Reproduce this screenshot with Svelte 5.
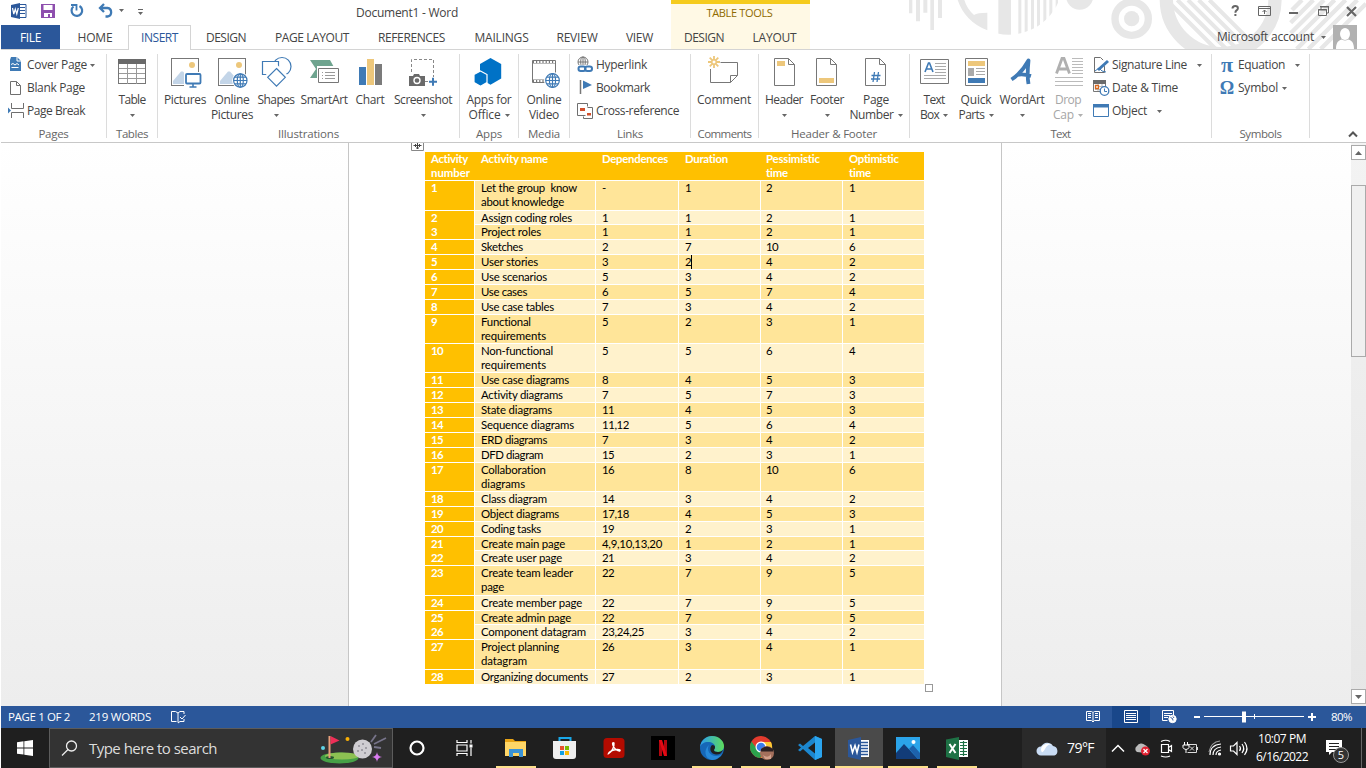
<script>
  // Tightens or loosens letter-spacing so a label fills its designed width.
  function fit(node, width) {
    if (!width) return;
    const n = node.textContent.length;
    const now = node.getBoundingClientRect().width;
    const s = (width - now) / n;
    node.style.letterSpacing = s.toFixed(3) + 'px';
  }

  const tabs = [
    ['HOME', 66, 35], ['INSERT', 63, 37, true], ['DESIGN', 70, 40], ['PAGE LAYOUT', 102, 74],
    ['REFERENCES', 97, 67], ['MAILINGS', 83, 54], ['REVIEW', 68, 41], ['VIEW', 57, 27]
  ];

  const head = [
    [['Activity', 37], ['number', 39]], [['Activity name', 67]], [['Dependences', 66]],
    [['Duration', 43]], [['Pessimistic', 54], ['time', 22]], [['Optimistic', 50], ['time', 22]]
  ];

  const rows = [
    [30, [['Let the group  know', 96], ['about knowledge', 83]], '-', 4, '1', '2', '1'],
    [14, [['Assign coding roles', 91]], '1', 6, '1', '2', '1'],
    [15, [['Project roles', 60]], '1', 6, '1', '2', '1'],
    [15, [['Sketches', 42]], '2', 6, '7', '10', '6'],
    [15, [['User stories', 57]], '3', 6, '2', '4', '2'],
    [15, [['Use scenarios', 66]], '5', 6, '3', '4', '2'],
    [15, [['Use cases', 46]], '6', 6, '5', '7', '4'],
    [15, [['Use case tables', 73]], '7', 6, '3', '4', '2'],
    [29, [['Functional', 50], ['requirements', 65]], '5', 6, '2', '3', '1'],
    [29, [['Non-functional', 72], ['requirements', 65]], '5', 6, '5', '6', '4'],
    [15, [['Use case diagrams', 88]], '8', 6, '4', '5', '3'],
    [15, [['Activity diagrams', 82]], '7', 6, '5', '7', '3'],
    [15, [['State diagrams', 71]], '11', 12, '4', '5', '3'],
    [15, [['Sequence diagrams', 93]], '11,12', 27, '5', '6', '4'],
    [15, [['ERD diagrams', 66]], '7', 6, '3', '4', '2'],
    [15, [['DFD diagram', 62]], '15', 12, '2', '3', '1'],
    [29, [['Collaboration', 65], ['diagrams', 44]], '16', 12, '8', '10', '6'],
    [15, [['Class diagram', 66]], '14', 12, '3', '4', '2'],
    [15, [['Object diagrams', 78]], '17,18', 27, '4', '5', '3'],
    [15, [['Coding tasks', 60]], '19', 12, '2', '3', '1'],
    [14, [['Create main page', 84]], '4,9,10,13,20', 60, '1', '2', '1'],
    [15, [['Create user page', 81]], '21', 12, '3', '4', '2'],
    [30, [['Create team leader', 92], ['page', 23]], '22', 12, '7', '9', '5'],
    [15, [['Create member page', 101]], '22', 12, '7', '9', '5'],
    [14, [['Create admin page', 90]], '22', 12, '7', '9', '5'],
    [15, [['Component datagram', 105]], '23,24,25', 42, '3', '4', '2'],
    [30, [['Project planning', 78], ['datagram', 46]], '26', 12, '3', '4', '1'],
    [14, [['Organizing documents', 107]], '27', 12, '2', '3', '1']
  ];
</script>

{#snippet t(s, w)}<span class="t" use:fit={w}>{s}</span>{/snippet}
{#snippet arrow()}<svg class="arr" width="5" height="3" viewBox="0 0 5 3"><path d="M0 0h5L2.5 3z" fill="currentColor" /></svg>{/snippet}
{#snippet big(icon, w, l1, w1, l2, w2, arr, off)}
  <div class="big" class:off style:width="{w}px">
    {@render icon()}
    <div class="ln">{@render t(l1, w1)}</div>
    <div class="ln second">{#if l2}{@render t(l2, w2)}{/if}{#if arr}<i class:sp={l2}>{@render arrow()}</i>{/if}</div>
  </div>
{/snippet}
{#snippet small(icon, l, w, gap)}
  <div class="small">{@render icon()}{@render t(l, w)}{#if gap}<i style:padding-left="{gap}px">{@render arrow()}</i>{/if}</div>
{/snippet}
{#snippet globe(x, y, r)}
  <g fill="#fff" stroke="#3f7ab5" stroke-width="1.2">
    <circle cx={x} cy={y} {r} /><ellipse cx={x} cy={y} rx={r * 0.45} ry={r} />
    <path d="M{x} {y - r}v{2 * r}M{x - r} {y}h{2 * r}M{x - r * 0.85} {y - r * 0.5}h{r * 1.7}M{x - r * 0.85} {y + r * 0.5}h{r * 1.7}" />
  </g>
{/snippet}
{#snippet photo(x)}
  <rect x={x + 0.5} y="58.5" width="27" height="27" fill="#fff" stroke="#777" />
  <path d="M{x + 2} 84V81l8-9.5h2l9 10V84z" fill="#c3d5e8" /><circle cx={x + 21} cy="65" r="3" fill="#edc77b" />
{/snippet}
{#snippet sheet(x)}
  <path d="M{x + 0.5} 58.5h14l6 6v21h-20zM{x + 14.5} 58.5v6h6" fill="#fff" stroke="#777" />
{/snippet}

{#snippet iTable()}<svg viewBox="116 57 32 32"><rect x="118.5" y="59.5" width="27" height="24" fill="#fff" stroke="#777" /><path d="M118 59h28v5h-28z" fill="#6a6a6a" /><path d="M119 68.5h26M119 73.500h26M119 78.500h26M127.500 64v20M136.500 64v20" stroke="#9a9a9a" /></svg>{/snippet}
{#snippet iPic()}<svg viewBox="169 57 32 32">{@render photo(171)}<path d="M184 72h17v17h-17z" fill="#fff" /><rect x="186" y="74" width="14.500" height="9.500" rx="1" fill="#fff" stroke="#3f7ab5" stroke-width="1.800" /><path d="M193 84v2.500M189.500 87h7" stroke="#3f7ab5" stroke-width="1.600" /></svg>{/snippet}
{#snippet iOnPic()}<svg viewBox="216 57 32 32">{@render photo(218)}<circle cx="240.300" cy="80.500" r="8.200" fill="#fff" />{@render globe(240.3, 80.5, 6.7)}</svg>{/snippet}
{#snippet iShapes()}<svg viewBox="260 57 32 32"><g fill="#fff" stroke="#3f7ab5" stroke-width="1.200"><circle cx="282" cy="66.500" r="9" /><path d="M262.500 61.500h16v13h-16z" /><path d="M276.500 67l10 10-10 10-10-10z" stroke="#fff" stroke-width="4" /><path d="M276.500 68.500l8.800 8.800-8.800 8.800-8.800-8.800z" /></g></svg>{/snippet}
{#snippet iSmart()}<svg viewBox="308 57 32 32"><path d="M310 60h20l5 9-5 9h-20l6-9z" fill="#6fa48f" /><path d="M317 66h23v19h-23z" fill="#fff" /><path d="M318.500 68.500h20v14h-20z" fill="#fff" stroke="#777" /><path d="M322 72.500h1M322 75.500h1M322 78.500h1M325 72.500h10M325 75.500h10M325 78.500h10" stroke="#999" /></svg>{/snippet}
{#snippet iChart()}<svg viewBox="354 57 32 32"><path d="M359 67h7v18h-7z" fill="#3f7ab5" /><path d="M367 59h7v26h-7z" fill="#edc77b" /><path d="M375 64h7v21h-7z" fill="#7b7b7b" /></svg>{/snippet}
{#snippet iShot()}<svg viewBox="407 57 32 32"><path d="M411.500 72V59.500h22V77M425 81.500h4" fill="none" stroke="#888" stroke-dasharray="3 2" /><path d="M409 76h4l1-2h5l1 2h5v10h-16z" fill="#6a6a6a" /><circle cx="417" cy="80.500" r="3" fill="#6a6a6a" stroke="#fff" stroke-width="1.400" /><path d="M429 81.800h8M433 77.800v8" stroke="#3f7ab5" stroke-width="2" /></svg>{/snippet}
{#snippet iApps()}<svg viewBox="473 57 32 32"><path d="M490.500 58l10.700 6v14.500l-10.700 6.200-10.500-6.200V64z" fill="#0072c6" /><path d="M480.500 71l6.500 3.600v8l-6.500 3.600-6.500-3.600v-8z" fill="#0072c6" stroke="#fff" stroke-width="1.200" /></svg>{/snippet}
{#snippet iVideo()}<svg viewBox="528 57 32 32"><path d="M532.500 60.500h23v22h-23z" fill="#fff" stroke="#777" /><path d="M533 62h22M533 81h22" stroke="#777" stroke-width="3" /><path d="M534 62h21M534 81h21" stroke="#fff" stroke-width="1.800" stroke-dasharray="2 1.200" /><circle cx="552.500" cy="80.500" r="8.500" fill="#fff" />{@render globe(552.5, 80.5, 6.8)}</svg>{/snippet}
{#snippet iComment()}<svg viewBox="708 57 32 32"><path d="M720.500 62.500h17v13l-7 7h-20V69M737.500 75.500h-7v7" fill="none" stroke="#777" /><path d="M714 56v4M714 64v4M708 62h4M716 62h4M709.700 57.700l3 3M715.300 63.300l3 3M718.300 57.700l-3 3M712.700 63.300l-3 3" stroke="#edc77b" stroke-width="1.800" /><circle cx="714" cy="62" r="2.200" fill="#fff" stroke="#edc77b" stroke-width="1.400" /></svg>{/snippet}
{#snippet iHeader()}<svg viewBox="768 57 32 32">{@render sheet(774)}<path d="M777 61h8v5h-8z" fill="#edc77b" /></svg>{/snippet}
{#snippet iFooter()}<svg viewBox="811 57 32 32">{@render sheet(816)}<path d="M819 78h15v5h-15z" fill="#edc77b" /></svg>{/snippet}
{#snippet iNum()}<svg viewBox="860 57 32 32">{@render sheet(865)}<path d="M874.500 72l-1.500 10M878.500 72l-1.500 10M871.500 75.500h9M871 79h9" stroke="#3f7ab5" stroke-width="1.300" /></svg>{/snippet}
{#snippet iText()}<svg viewBox="918 57 32 32"><path d="M920.500 59.500h28v24h-28z" fill="#fff" stroke="#777" /><path d="M925 72l3.500-9h1l3.500 9M926.500 69h5" fill="none" stroke="#3f7ab5" stroke-width="1.600" /><path d="M935 63.500h11M935 66.500h11M935 69.500h11M935 72.500h11M924 75.500h22M924 78.500h22" stroke="#aaa" /></svg>{/snippet}
{#snippet iQuick()}<svg viewBox="960 57 32 32"><path d="M965.500 58.500h22v27h-22z" fill="#fff" stroke="#777" /><path d="M968 61h17v5h-17z" fill="#edc77b" /><path d="M968 68h6v8h-6z" fill="#aaa" /><path d="M976 68.500h9M976 71.500h9M976 74.500h9" stroke="#aaa" /><path d="M968 78h17v5h-17z" fill="#3f7ab5" /></svg>{/snippet}
{#snippet iWA()}<svg viewBox="1006 57 32 32"><path d="M1011.500 79.500C1020 74 1025 67 1028.500 60.500C1027.500 70 1027 76 1028.500 84M1017 75C1022 73.500 1026 74.500 1031 76" fill="none" stroke="#3f7ab5" stroke-width="3.800" stroke-linejoin="round" /></svg>{/snippet}
{#snippet iDrop()}<svg viewBox="1052 57 32 32"><path d="M1056.500 73.500l5.500-15h2l5.500 15M1059 69h8" fill="none" stroke="#b0b0b0" stroke-width="2.800" /><path d="M1072 58.500h11M1072 61.500h11M1072 64.500h11M1072 67.500h11M1072 70.500h11M1072 73.500h11M1055 77.500h28M1055 81.500h28M1055 85.500h28" stroke="#bbb" /></svg>{/snippet}

{#snippet sCover()}<svg viewBox="9 57 16 16"><path d="M12 57h6l4 4v10H11V60z" fill="#3f7ab5" /><path d="M18 57v4h4" fill="none" stroke="#fff" /><path d="M12 64.500l2-1 2 1.500 2-1.500 2 1.500M12.500 67.500h7" fill="none" stroke="#fff" /></svg>{/snippet}
{#snippet sBlank()}<svg viewBox="8 79 16 16"><path d="M10.500 80.500h6l4 4v9h-10zM16.500 80.500v4h4" fill="#fff" stroke="#6f6f6f" /></svg>{/snippet}
{#snippet sBreak()}<svg viewBox="8 102 16 16"><path d="M11.500 102v5.500h12V102M11.500 117v-5.500h12V117" fill="none" stroke="#6f6f6f" /><path d="M8 106.500l3 3-3 3z" fill="#3f7ab5" /></svg>{/snippet}
{#snippet sLink()}<svg viewBox="577 57 16 16"><g fill="none" stroke="#777"><circle cx="583" cy="62" r="5" /><ellipse cx="583" cy="62" rx="2.300" ry="5" /><path d="M578 62h10M583 57v10" /></g><path d="M577 65h16v8h-16z" fill="#fff" /><g fill="none" stroke="#3f7ab5" stroke-width="2"><rect x="578.500" y="66.500" width="7" height="4.500" rx="2.200" /><rect x="585" y="66.500" width="7" height="4.500" rx="2.200" /></g></svg>{/snippet}
{#snippet sBook()}<svg viewBox="577 80 16 16"><path d="M580.500 80v14" stroke="#777" stroke-width="1.500" /><path d="M583 80.500l9 4.500-9 4z" fill="#3f7ab5" /></svg>{/snippet}
{#snippet sCross()}<svg viewBox="577 102 16 16"><path d="M585.500 114.500h-8v-12h10v3" fill="none" stroke="#6f6f6f" /><path d="M587.500 106.500h5v11h-9v-2" fill="none" stroke="#6f6f6f" /><path d="M580 107h5v3h-5zM587 112h4v2.500h-4z" fill="#d2502d" /></svg>{/snippet}
{#snippet sSign()}<svg viewBox="1093 56 16 16"><path d="M1094.500 56.500h6l4 4v11h-10z" fill="#fff" stroke="#6f6f6f" /><path d="M1097 69l10-10" stroke="#fff" stroke-width="5" /><path d="M1098 69l10-9" stroke="#3f7ab5" stroke-width="3" /><path d="M1095 70l4-3 3 3 4 1" fill="none" stroke="#3f7ab5" /></svg>{/snippet}
{#snippet sDate()}<svg viewBox="1093 79 16 16"><path d="M1093.500 80.500h12v10h-12z" fill="#fff" stroke="#777" /><path d="M1093 79h13v4h-13z" fill="#6a6a6a" /><path d="M1095 85.500h9M1095 88.500h5M1098 83v7M1102 83v4" stroke="#bbb" /><path d="M1095.500 84.500h3v3h-3z" fill="#fff" stroke="#d9681d" stroke-width="1.300" /><circle cx="1104.500" cy="90" r="4.300" fill="#fff" stroke="#3f7ab5" stroke-width="1.300" /><path d="M1104.500 87.500v3h2.500" fill="none" stroke="#3f7ab5" /></svg>{/snippet}
{#snippet sObj()}<svg viewBox="1093 103 16 16"><path d="M1093.500 104.500h15v12h-15z" fill="#fff" stroke="#3f7ab5" /><path d="M1093 104h16v3.500h-16z" fill="#3f7ab5" /></svg>{/snippet}
{#snippet sPi()}<b class="greek pi">π</b>{/snippet}
{#snippet sOm()}<b class="greek">Ω</b>{/snippet}

<div class="app">
  <header>
    <svg class="deco" width="466" height="49" viewBox="0 0 1398 147">
      <defs>
        <clipPath id="c1"><circle cx="325" cy="-60" r="164" /></clipPath>
        <clipPath id="c2"><circle cx="962" cy="-2" r="150" /></clipPath>
      </defs>
      <g fill="#e7e7e7">
        <path d="M27 0h10v40H27zM48 0h12v64H48zM70 0h12v38H70zM91 0h11v90H91zM114 0h12v54h-12z" />
        <path d="M173 0H193Q200 25 222 45Q232 38 262 38V91Q195 65 173 0z" />
        <path clip-path="url(#c1)" d="M295 0h38v147h-38zM355 0h9v147h-9zM374 0h9v147h-9zM393 0h9v147h-9zM411 0h9v147h-9zM430 0h9v147h-9zM448 0h9v147h-9zM467 0h7v147h-7z" />
        <circle cx="539" cy="-12" r="41" /><circle cx="695" cy="56" r="23" />
      </g>
      <circle cx="695" cy="56" r="50" fill="none" stroke="#e7e7e7" stroke-width="22" />
      <circle cx="962" cy="-2" r="163" fill="none" stroke="#e7e7e7" stroke-width="40" />
      <g clip-path="url(#c2)" stroke="#e7e7e7" stroke-width="12"><path d="M800 0l150 150M832 0l150 150M864 0l150 150M896 0l150 150M928 0l150 150" /></g>
      <g stroke="#e7e7e7" stroke-width="13"><path d="M1172 100L1272 0M1172 68L1240 0M1180 124L1304 0M1190 147L1337 0M1225 147L1372 0M1262 147L1398 11M1176 30L1206 0" /></g>
    </svg>
    <div class="titlebar">
      <svg class="qat" width="150" height="24" viewBox="0 0 150 24">
        <path d="M18 4.500h8v13h-8z" fill="#fff" stroke="#2b579a" /><path d="M20 7.500h5M20 10.500h5M20 13.500h5" stroke="#2b579a" />
        <path d="M11 5l9-2v16l-9-2z" fill="#2b579a" /><path d="M12.500 8l1.300 6 1.500-5 1.500 5L18.300 8" fill="none" stroke="#fff" stroke-width="1.200" />
        <path d="M41 4h14v14H41z" fill="#8e4fae" /><path d="M43.500 5h9v5h-9zM44 13h8v4h-2v-3h-2v3h-4z" fill="#fff" />
        <path d="M73.500 6.500a5.300 5.300 0 1 0 6 -.5" fill="none" stroke="#3f7ab5" stroke-width="2.200" /><path d="M71 5h5.500v5.500" fill="none" stroke="#3f7ab5" stroke-width="1.800" />
        <path d="M104 4l-4 4 4 4M100.500 8h7a4.300 4.300 0 0 1 0 8.500h-2" fill="none" stroke="#3f7ab5" stroke-width="2.300" />
        <path d="M119 9h5l-2.500 3zM138 12h5l-2.500 3z" fill="#666" /><path d="M138 9.500h5" stroke="#666" />
      </svg>
      <div class="title">{@render t('Document1 - Word', 102)}</div>
      <svg class="win" width="140" height="24" viewBox="1226 0 140 24" fill="none" stroke="#666">
        <path d="M1232.500 8.500q0-2.500 2.700-2.500t2.700 2.300q0 1.500-1.500 2.200-1 .5-1 2.200M1235.400 14v2" stroke-width="2" />
        <path d="M1258.500 6.500h12v9h-12zM1259 8.500h11M1264.500 14v-4M1262.500 12l2-2 2 2" />
        <path d="M1289 13h9" stroke-width="2" /><path d="M1318.500 9.500h8v6h-8zM1321 9V7M1320.500 7h8v6h-2M1318 10h9M1320 6.500h9" /><path d="M1347 7l9 9M1356 7l-9 9" stroke-width="2.200" />
      </svg>
    </div>
    <div class="tabs">
      <div class="tab file">{@render t('FILE', 21)}</div>
      {#each tabs as [s, w, tw, on]}
        <div class="tab" class:on style:width="{w}px">{@render t(s, tw)}</div>
      {/each}
      <div class="ctx">
        <div class="ctxname">{@render t('TABLE TOOLS', 66)}</div>
        <div class="ctxtabs"><div class="tab" style:width="66px">{@render t('DESIGN', 40)}</div><div class="tab" style:width="75px">{@render t('LAYOUT', 44)}</div></div>
      </div>
      <div class="acct">
        {@render t('Microsoft account', 97)}{@render arrow()}
        <svg width="24" height="24" viewBox="0 0 24 24"><path d="M0 0h24v24H0z" fill="#b1b1b1" /><ellipse cx="12" cy="9" rx="5" ry="6" fill="#fff" /><path d="M3 24c0-7 3-9 6-9.500q3 2 6 0c3 .5 6 2.500 6 9.500z" fill="#fff" /></svg>
      </div>
    </div>
  </header>

  <div class="ribbon">
    <section style:width="106px"><div class="body"><div class="col" style:padding-left="7px">
      {@render small(sCover, 'Cover Page', 60, 3)}{@render small(sBlank, 'Blank Page', 58)}{@render small(sBreak, 'Page Break', 58)}
    </div></div><footer>{@render t('Pages', 30)}</footer></section>
    <section style:width="51px"><div class="body">{@render big(iTable, 50, 'Table', 27, '', 0, true)}</div><footer>{@render t('Tables', 32)}</footer></section>
    <section style:width="302px"><div class="body" style:padding-left="3px">
      {@render big(iPic, 48, 'Pictures', 42)}{@render big(iOnPic, 46, 'Online', 35, 'Pictures', 42)}{@render big(iShapes, 42, 'Shapes', 37, '', 0, true)}{@render big(iSmart, 54, 'SmartArt', 47)}{@render big(iChart, 38, 'Chart', 29)}{@render big(iShot, 68, 'Screenshot', 58, '', 0, true)}
    </div><footer>{@render t('Illustrations', 61)}</footer></section>
    <section style:width="59px"><div class="body">{@render big(iApps, 58, 'Apps for', 45, 'Office', 32, true)}</div><footer>{@render t('Apps', 26)}</footer></section>
    <section style:width="51px"><div class="body">{@render big(iVideo, 50, 'Online', 35, 'Video', 30)}</div><footer>{@render t('Media', 32)}</footer></section>
    <section style:width="121px"><div class="body"><div class="col" style:padding-left="7px">
      {@render small(sLink, 'Hyperlink', 51)}{@render small(sBook, 'Bookmark', 54)}{@render small(sCross, 'Cross-reference', 83)}
    </div></div><footer>{@render t('Links', 26)}</footer></section>
    <section style:width="68px"><div class="body">{@render big(iComment, 66, 'Comment', 54)}</div><footer>{@render t('Comments', 54)}</footer></section>
    <section style:width="151px"><div class="body" style:padding-left="3px">
      {@render big(iHeader, 44, 'Header', 38, '', 0, true)}{@render big(iFooter, 42, 'Footer', 34, '', 0, true)}{@render big(iNum, 56, 'Page', 26, 'Number', 44, true)}
    </div><footer>{@render t('Header & Footer', 86)}</footer></section>
    <section style:width="302px"><div class="body" style:padding-left="4px">
      {@render big(iText, 40, 'Text', 21, 'Box', 19, true)}{@render big(iQuick, 44, 'Quick', 31, 'Parts', 26, true)}{@render big(iWA, 48, 'WordArt', 45, '', 0, true)}{@render big(iDrop, 44, 'Drop', 26, 'Cap', 21, true, true)}
      <div class="col" style:padding-left="3px">{@render small(sSign, 'Signature Line', 75, 10)}{@render small(sDate, 'Date & Time', 66)}{@render small(sObj, 'Object', 35, 10)}</div>
    </div><footer>{@render t('Text', 20)}</footer></section>
    <section style:width="98px"><div class="body"><div class="col" style:padding-left="7px">
      {@render small(sPi, 'Equation', 47, 10)}{@render small(sOm, 'Symbol', 40, 4)}
    </div></div><footer>{@render t('Symbols', 42)}</footer></section>
    <svg class="collapse" width="10" height="8" viewBox="0 0 10 8"><path d="M1 6.500l4-4 4 4" fill="none" stroke="#555" stroke-width="2" /></svg>
  </div>

  <main>
    <div class="paper">
      <svg class="handle" width="13" height="12" viewBox="0 0 13 12"><path d="M.5 -2h12v12.500H.5z" fill="#fff" stroke="#888" /><path d="M2.500 5.500h8M6.500 0v9M4.500 4v3M8.500 4v3M5 8h3" stroke="#444" /></svg>
      <div class="table">
        <div class="row hd">
          {#each head as cell}<div class="cell">{#each cell as [s, w]}<div>{@render t(s, w)}</div>{/each}</div>{/each}
        </div>
        {#each rows as [h, name, dep, dw, a, b, c], i}
          <div class="row" class:odd={i % 2 === 0} style:height="{h}px">
            <div class="cell n">{@render t(String(i + 1), i < 9 ? 6 : 12)}</div>
            <div class="cell">{#each name as [s, w]}<div>{@render t(s, w)}</div>{/each}</div>
            <div class="cell">{@render t(dep, dw)}</div>
            <div class="cell">{@render t(a, 6)}{#if i === 4}<u class="caret"></u>{/if}</div>
            <div class="cell">{@render t(b, b.length * 6)}</div>
            <div class="cell">{@render t(c, 6)}</div>
          </div>
        {/each}
      </div>
      <div class="resize"></div>
    </div>
    <div class="scroll">
      <div class="sbtn"><svg width="7" height="4" viewBox="0 0 7 4"><path d="M0 4h7L3.500 0z" fill="#666" /></svg></div>
      <div class="thumb"></div>
      <div class="sbtn"><svg width="7" height="4" viewBox="0 0 7 4"><path d="M0 0h7L3.500 4z" fill="#666" /></svg></div>
    </div>
  </main>

  <div class="status">
    {@render t('PAGE 1 OF 2', 62)}
    <span class="words">{@render t('219 WORDS', 62)}</span>
    <svg width="15" height="14" viewBox="0 0 15 14" fill="none" stroke="#fff"><path d="M5.500 11.500h-5v-10h4l2.500 1.500v9.500M7 3l2-1.500h4V4M13 9v2.500h-4l-2 1.500M9 7l2 2 3.500-4" /></svg>
    <div class="views">
      <svg width="14" height="14" viewBox="0 0 14 14" fill="none" stroke="#fff"><path d="M.5 1.500h5l1.500 1 1.500-1h5v9h-5L7 12l-1.500-1.500h-5zM7 3v9M2 3.500h3M2 5.500h3M2 7.500h3M9 3.500h3M9 5.500h3M9 7.500h3" /></svg>
      <div class="view"><svg width="14" height="14" viewBox="0 0 14 14" fill="none" stroke="#fff"><path d="M.5.5h13v12H.5zM2 3.500h10M2 5.500h10M2 7.500h10M2 9.500h10" /></svg></div>
      <svg width="15" height="14" viewBox="0 0 15 14" fill="none" stroke="#fff"><path d="M.5 10.500V.5h11V5M2 3.500h8M2 5.500h6M2 7.500h4M.5 10.500h5" /><circle cx="10.500" cy="9" r="3.700" fill="#fff" /><path d="M8.500 7.500l2 1 .5 2M11 6.500l1 1.500" stroke="#2b579a" /></svg>
    </div>
    <svg class="zoom" width="122" height="14" viewBox="0 0 122 14"><path d="M0 7h6M114 7h8M118 3v8" stroke="#fff" stroke-width="2" /><path d="M10 6.500h100M60.500 4v5" stroke="#fff" /><path d="M48 1.500h4v11h-4z" fill="#fff" /></svg>
    {@render t('80%', 21)}
  </div>

  <div class="taskbar">
    <div class="start"><svg width="16" height="16" viewBox="0 0 16 16"><path d="M0 2.200L6.500 1.300v6.200H0zM7.300 1.200L16 0v7.500H7.300zM0 8.400h6.500v6.200L0 13.800zM7.300 8.400H16V16l-8.700-1.200z" fill="#fff" /></svg></div>
    <div class="search">
      <svg width="17" height="17" viewBox="0 0 17 17" fill="none" stroke="#eee" stroke-width="1.300"><circle cx="10.500" cy="6" r="5" /><path d="M7 9.500l-6 6" /></svg>
      <span class="ph">{@render t('Type here to search', 128)}</span>
      <svg width="68" height="32" viewBox="319 732 68 32">
        <ellipse cx="339.500" cy="758" rx="19" ry="5.500" fill="#46a046" /><ellipse cx="342" cy="756" rx="17" ry="3.500" fill="#8cc152" /><ellipse cx="330" cy="757.500" rx="4" ry="1.500" fill="#25552f" />
        <path d="M329.500 736v22" stroke="#e8a07c" stroke-width="2" /><path d="M330.500 736l9 4.500-9 4z" fill="#ee2e57" />
        <circle cx="323" cy="748" r="2" fill="#5fd4e8" /><circle cx="347.500" cy="739" r="2" fill="#fab005" />
        <circle cx="362.500" cy="749" r="9.500" fill="#cfcdd2" /><g fill="#8f8c96"><circle cx="359" cy="746" r="1" /><circle cx="363" cy="744" r="1" /><circle cx="366" cy="748" r="1" /><circle cx="362" cy="750" r="1" /><circle cx="358" cy="751" r="1" /><circle cx="365" cy="753" r="1" /></g>
        <path d="M371 742l5-7M374 744l12-6M374 747l7 1" stroke="#77748a" stroke-width="1.800" /><path d="M377 752q.5 4.500 5 5-4.500.5-5 5-.5-4.500-5-5 4.500-.5 5-5z" fill="#d97bf0" />
      </svg>
    </div>
    <div class="cell2 cort"><svg width="16" height="16" viewBox="0 0 16 16"><circle cx="8" cy="8" r="6.500" fill="none" stroke="#fff" stroke-width="2.200" /></svg></div>
    <div class="cell2 tv"><svg width="18" height="16" viewBox="0 0 18 16" fill="none" stroke="#fff" stroke-width="1.200"><path d="M1 0v2.500h10V0M1 16v-2.500h10V16M1 5h10v6H1zM15 0v3.500M15 7.500V16" /><path d="M13.500 4.500h3v3h-3z" fill="#fff" stroke="none" /></svg></div>
    <div class="cell2 run"><svg width="24" height="24" viewBox="0 0 24 24"><path d="M1 3h8l2 2h11v15H1z" fill="#e9a416" /><path d="M1 6h21v14H1z" fill="#ffd667" /><path d="M5 13h14v8h-4v-4H9v4H5z" fill="#3b93d6" /></svg></div>
    <div class="cell2"><svg width="24" height="24" viewBox="0 0 24 24"><path d="M6.500 6V2h11v4" fill="none" stroke="#19a7e8" stroke-width="2" /><path d="M0 5h23v15q0 3-3 3H3q-3 0-3-3z" fill="#eee" /><path d="M7 10h4v4H7z" fill="#e8502d" /><path d="M12 10h4v4h-4z" fill="#7db900" /><path d="M7 15h4v4H7z" fill="#129fe0" /><path d="M12 15h4v4h-4z" fill="#fab900" /></svg></div>
    <div class="cell2"><svg width="24" height="24" viewBox="0 0 24 24"><rect x="1.500" y="2" width="21" height="20" rx="3.500" fill="#b30b00" /><path d="M6.500 17.500c3-1.500 6-6 5.500-10.500-1-1-2 0-1 2.500s3.500 5 6.500 5.500c1.500-.5 0-2-3-1.500-3.500.3-7.500 2-8 4z" fill="none" stroke="#fff" stroke-width="1.400" /></svg></div>
    <div class="cell2"><svg width="24" height="24" viewBox="0 0 24 24"><path d="M0 0h24v24H0z" fill="#000" /><path d="M8 4h3v16H8zM13 4h3v16h-3z" fill="#b1060f" /><path d="M8 4h3l5 16h-3z" fill="#e50914" /></svg></div>
    <div class="cell2 run"><svg width="24" height="24" viewBox="0 0 24 24"><defs><linearGradient id="e1"><stop offset="0" stop-color="#2b9df0" /><stop offset="1" stop-color="#5ddc5a" /></linearGradient></defs><circle cx="12" cy="12" r="12" fill="#1667b7" /><path d="M0 11C1 4 6 0 12 0c7 0 12 5 12 10 0 4-3 6-6 6-3 0-4-1-4-2s1-1 1-3c0-3-3-5-7-5-4 0-7 2-8 5z" fill="url(#e1)" /><path d="M9 9c-3 5 1 11 7 11 3 0 5-1 6-2-3 5-8 6-10 6C5 23 3 14 9 9z" fill="#2688d8" /><path d="M15 11c0 2-1 2-1 3s1 2 4 2q3 0 5-2-2 5-7 4.500C10 18 9 12 12 9q3 0 3 2z" fill="#202020" /></svg></div>
    <div class="cell2 run"><svg width="26" height="26" viewBox="-1 0 26 26"><circle cx="12" cy="12" r="11" fill="#e33b2e" /><path d="M2.500 6.500A11 11 0 0 0 11 23l5-8-8-1z" fill="#2ba24c" /><path d="M12 7h10a11 11 0 0 1-10 16l5-9z" fill="#fcc934" /><circle cx="12" cy="12" r="5.500" fill="#fff" /><circle cx="12" cy="12" r="4.300" fill="#3a7cec" /><circle cx="18" cy="18" r="7" fill="#a4705c" /><path d="M12 14q6-5 12 0v2.500H12z" fill="#2b2022" /><path d="M14 20q5 4 8-1v5h-6z" fill="#d3a08b" /></svg></div>
    <div class="cell2 run"><svg width="24" height="24" viewBox="0 0 24 24"><path d="M17 0l7 3v18l-7 3L5 13l-3 2.500L0 14l3-2.500L0 9l2-1.500L5 10zM17 6.500L10 12l7 5.500z" fill="#1c87cf" fill-rule="evenodd" /><path d="M17 0l7 3v18l-7 3z" fill="#2ba5ef" /></svg></div>
    <div class="cell2 run active"><svg width="24" height="24" viewBox="0 0 24 24"><path d="M12 4h10v17H12z" fill="#fff" /><path d="M14 6.500h7M14 9.500h7M14 12.500h7M14 15.500h7M14 18.500h7" stroke="#2b579a" stroke-width="1.300" /><path d="M1 4l13-3v23L1 21z" fill="#2b579a" /><path d="M3.500 8.500l2 8L8 9.500l2 7 2-8" fill="none" stroke="#fff" stroke-width="1.600" /></svg></div>
    <div class="cell2 run"><svg width="24" height="24" viewBox="0 0 24 24"><path d="M0 1h24v22H0z" fill="#2ba4ea" /><path d="M0 17l8-9 14 15H0z" fill="#123c78" /><path d="M13 13l4-4 7 8v6h-2z" fill="#1d62ac" /><circle cx="17.500" cy="6" r="2" fill="#fff" /></svg></div>
    <div class="cell2 run"><svg width="24" height="24" viewBox="0 0 24 24"><path d="M12 4h11v17H12z" fill="#fff" /><path d="M15 6.500h7M15 9.500h7M15 12.500h7M15 15.500h7M15 18.500h7M18.500 5v15" stroke="#1e7145" stroke-width="1.200" /><path d="M1 3.500L14 1v23L1 21z" fill="#1e7145" /><path d="M4.500 8l6 9M10.500 8l-6 9" stroke="#fff" stroke-width="2" /></svg></div>
    <div class="weather">
      <svg width="23" height="15" viewBox="0 0 23 15"><path d="M5 14.500a4.500 4.500 0 0 1 0-9A7 7 0 0 1 17 5a5 5 0 0 1 1.500 9.500z" fill="#c9dcf4" /><path d="M5 9a7 6 0 0 1 11-5Q12 2 9 8T5 9z" fill="#fff" /></svg>
      {@render t('79°F', 27)}
    </div>
    <svg class="tray" width="144" height="20" viewBox="1106 738 144 20" fill="none" stroke="#fff" stroke-width="1.200">
      <path d="M1112 751.500l6-6 6 6" stroke-width="1.500" />
      <path d="M1137 752a3.500 3.500 0 0 1 0-6 5 5 0 0 1 8-1q3 1 3 4l-2 4z" fill="#bbb" stroke="none" /><circle cx="1145.500" cy="751" r="4.500" fill="#e02030" stroke="none" /><path d="M1143.500 749l4 4M1147.500 749l-4 4" />
      <path d="M1161.500 744.500h7v8h-7zM1168.500 747.500l3-2v6l-3-2M1161 741.500q5-2.500 9 0M1161 756q5 2 9 0" />
      <path d="M1188 744.500h8.500v8h-9M1197.500 747v3M1190 746.500l4 4M1194 746.500l-4 4" stroke="#ddd" stroke-width="1" /><path d="M1184.500 742v3M1187.500 742v3M1183 745h6v2.500q-1 2-3 2t-3-2zM1186 750v3" stroke-width="1" />
      <path d="M1210 755q0-10 11-11M1213 755q0-7 8-8M1216 755q0-4 5-5" /><path d="M1209 752q2-10 11-11" stroke="#999" /><circle cx="1219.500" cy="754" r="1" fill="#fff" />
      <path d="M1230.500 746h3l3.500-3.500v12l-3.500-3.500h-3zM1239.500 746q2 2.500 0 5M1242 744q3.500 4.500 0 9M1244.500 742q5 6.500 0 13" />
    </svg>
    <div class="clock"><div>{@render t('10:07 PM', 48)}</div><div>{@render t('6/16/2022', 52)}</div></div>
    <div class="notif"><svg width="18" height="16" viewBox="0 0 18 16"><path d="M0 0h16v12H6l-3 3v-3H0z" fill="#fff" /><path d="M3 3.500h10M3 6.500h10M3 9.500h7" stroke="#222" /></svg><span class="badge">5</span></div>
  </div>
</div>

<style>
  :global(body) { background: #fff; overflow: hidden; }
  .app { width: 1365px; height: 768px; padding-left: 1px; box-sizing: content-box; display: flex; flex-direction: column; overflow: hidden; font: 12px/16px "Open Sans", "Noto Sans", sans-serif; color: #444; background: #fff; }
  .t { display: inline-block; white-space: pre; }
  i { font-style: normal; }
  svg { display: block; flex: none; overflow: visible; }
  header { height: 49px; border-bottom: 1px solid #d4d4d4; position: relative; display: flex; flex-direction: column; }
  .deco { position: absolute; right: 0; top: 0; overflow: hidden; }
  .titlebar { height: 25px; display: flex; position: relative; }
  .qat { margin-left: -1px; }
  .title { width: 104px; margin: 0 766px 0 206px; line-height: 26px; }
  .tabs { height: 24px; display: flex; position: relative; }
  .tab { flex: none; text-align: center; line-height: 25px; box-sizing: border-box; height: 24px; }
  .file { width: 59px; background: #2b579a; color: #fff; margin-right: 2px; }
  .tab.on { height: 25px; background: #fff; border: 1px solid #d4d4d4; border-bottom: 0; color: #2b579a; line-height: 23px; }
  .ctx { width: 139px; height: 49px; margin: -25px 0 0 3px; background: #fff9e5; border-top: 4px solid #f5cb1c; box-sizing: border-box; }
  .ctxname { height: 21px; line-height: 18px; text-align: center; color: #8f6b00; font-size: 11px; padding-right: 2px; }
  .ctxtabs { display: flex; }
  .acct { margin-left: auto; display: flex; align-items: center; gap: 7px; padding-right: 9px; }
  .arr { display: inline-block; color: #666; vertical-align: 2px; }
  .ribbon { height: 92px; border-bottom: 1px solid #c8c8c8; display: flex; background: #fff; flex: none; }
  section { flex: none; box-sizing: border-box; padding: 3px 1px 0 0; display: flex; flex-direction: column; height: 92px; background: linear-gradient(#dcdcdc, #dcdcdc) right 4px / 1px 84px no-repeat; }
  .body { display: flex; height: 73px; }
  .big { flex: none; display: flex; flex-direction: column; align-items: center; padding-top: 4px; }
  .big > :global(svg) { width: 32px; height: 32px; margin-bottom: 3px; }
  .ln { height: 16px; white-space: nowrap; }
  .second { margin-top: -1px; }
  .sp { padding-left: 4px; }
  .off { color: #a6a6a6; }
  .off .arr { color: #b0b0b0; }
  .col { display: flex; flex-direction: column; }
  .small { height: 23px; display: flex; align-items: center; white-space: nowrap; }
  .small > :global(svg) { width: 16px; height: 16px; margin-right: 3px; }
  .greek { width: 16px; margin-right: 3px; font: bold 18px/20px "Liberation Serif", serif; color: #3f7ab5; text-align: center; }
  .pi { font-size: 22px; }
  footer { text-align: center; font-size: 11.500px; line-height: 16px; color: #666; height: 16px; }
  .collapse { margin: 80px 0 0 38px; }
  main { height: 563px; position: relative; background: linear-gradient(#fff, #ededed); display: flex; flex: none; overflow: hidden; }
  .paper { margin-left: 347px; width: 652px; border: solid #c6c6c6; border-width: 0 1px; background: #fff; position: relative; }
  .handle { position: absolute; left: 62px; top: -3px; }
  .table { margin: 9px 0 0 76px; width: 499px; font: 11.400px/14px Lato, "Open Sans", sans-serif; color: #000; }
  .row { display: grid; grid-template-columns: 50px 121px 83px 82px 82px 81px; background: #fff2cc; border-bottom: 1px solid #fff; box-sizing: border-box; }
  .row:last-child { border-bottom: 0; }
  .odd { background: #ffe599; }
  .cell { padding-left: 6px; border-right: 1px solid #fff; white-space: nowrap; height: 100%; box-sizing: border-box; }
  .cell:nth-child(5) { padding-left: 5px; }
  .cell:last-child { border-right: 0; }
  .cell div { height: 14px; }
  .hd { height: 29px; background: #ffc000; color: #fff; font-weight: bold; }
  .hd .cell { border-right-color: #ffc000; }
  .n { background: #ffc000; color: #fff; font-weight: bold; }
  .caret { display: inline-block; width: 1px; height: 14px; background: #000; vertical-align: top; }
  .resize { position: absolute; left: 576px; top: 541px; width: 6px; height: 6px; border: 1px solid #999; background: #fff; }
  .scroll { margin-left: auto; width: 15px; padding: 2px 0; display: flex; flex-direction: column; background: linear-gradient(#f3f3f3, #e6e6e6); }
  .sbtn { width: 13px; height: 13px; border: 1px solid #aaa; background: #fff; display: flex; align-items: center; justify-content: center; }
  .thumb { margin-top: 25px; height: 170px; border: 1px solid #aaa; background: #f0f0f0; margin-bottom: auto; }
  .status { height: 22px; flex: none; background: #2b579a; color: #fff; display: flex; align-items: center; padding: 0 14px 0 7px; font-size: 11.500px; }
  .words { margin: 0 20px 0 19px; }
  .views { margin-left: auto; display: flex; align-items: center; gap: 12px; }
  .view { width: 38px; height: 22px; background: #19478a; display: flex; align-items: center; justify-content: center; }
  .zoom { margin: 0 15px 0 17px; }
  .taskbar { height: 40px; flex: none; background: #1f1f1f; display: flex; color: #fff; }
  .start { width: 48px; display: flex; align-items: center; justify-content: center; }
  .search { width: 344px; box-sizing: border-box; border: 1px solid #5c5c5c; background: #333; display: flex; align-items: center; padding-left: 11px; }
  .ph { font-size: 15px; color: #ddd; margin: 0 102px 0 11px; }
  .cell2 { width: 49px; display: flex; align-items: center; justify-content: center; }
  .cort { width: 48px; }
  .tv { width: 48px; margin-right: 2px; }
  .run { background: linear-gradient(#fce08c, #fce08c) center bottom / 40px 2px no-repeat; }
  .active { width: 48px; margin-left: 1px; background: linear-gradient(#fce08c, #fce08c) center bottom / 48px 2px no-repeat, #4a4a4a; }
  .weather { width: 84px; margin-left: 41px; box-sizing: border-box; background: #2a2a2a; display: flex; align-items: center; gap: 8px; padding-left: 14px; font-size: 14px; }
  .tray { margin-top: 10px; }
  .clock { width: 64px; text-align: center; padding-top: 2px; line-height: 18px; }
  .notif { width: 47px; position: relative; border-right: 1px solid #666; }
  .notif svg { margin: 12px 0 0 12px; }
  .badge { position: absolute; left: 19px; top: 19px; width: 14px; height: 14px; border: 1px solid #999; border-radius: 50%; background: #333; text-align: center; line-height: 14px; font-size: 11px; }
</style>
